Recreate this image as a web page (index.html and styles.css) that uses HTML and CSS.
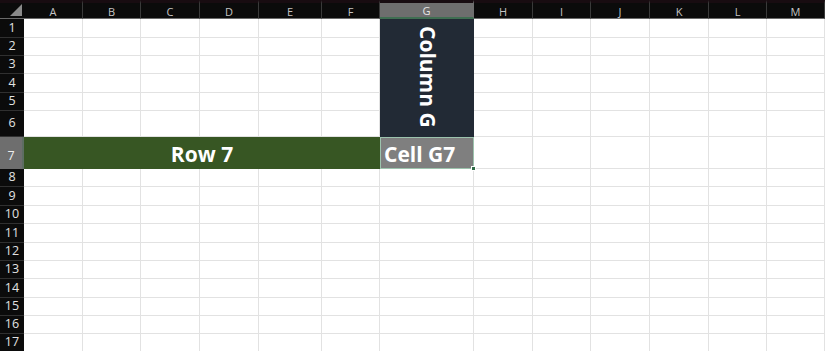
FILE: index.html
```html
<!DOCTYPE html>
<html>
<head>
<meta charset="utf-8">
<link rel="stylesheet" href="styles.css">
</head>
<body>
<div class="sheet">
  <div class="corner"><div class="tri"></div></div>
  <div class="ch">A</div><div class="ch">B</div><div class="ch">C</div><div class="ch">D</div><div class="ch">E</div><div class="ch">F</div><div class="ch sel">G</div><div class="ch">H</div><div class="ch">I</div><div class="ch">J</div><div class="ch">K</div><div class="ch">L</div><div class="ch">M</div>

  <div class="rh">1</div><div class="c"></div><div class="c"></div><div class="c"></div><div class="c"></div><div class="c"></div><div class="c"></div>
  <div class="colg"><span class="vtext">Column G</span></div>
  <div class="c"></div><div class="c"></div><div class="c"></div><div class="c"></div><div class="c"></div><div class="c"></div>

  <div class="rh">2</div><div class="c"></div><div class="c"></div><div class="c"></div><div class="c"></div><div class="c"></div><div class="c"></div><div class="c"></div><div class="c"></div><div class="c"></div><div class="c"></div><div class="c"></div><div class="c"></div>
  <div class="rh">3</div><div class="c"></div><div class="c"></div><div class="c"></div><div class="c"></div><div class="c"></div><div class="c"></div><div class="c"></div><div class="c"></div><div class="c"></div><div class="c"></div><div class="c"></div><div class="c"></div>
  <div class="rh">4</div><div class="c"></div><div class="c"></div><div class="c"></div><div class="c"></div><div class="c"></div><div class="c"></div><div class="c"></div><div class="c"></div><div class="c"></div><div class="c"></div><div class="c"></div><div class="c"></div>
  <div class="rh">5</div><div class="c"></div><div class="c"></div><div class="c"></div><div class="c"></div><div class="c"></div><div class="c"></div><div class="c"></div><div class="c"></div><div class="c"></div><div class="c"></div><div class="c"></div><div class="c"></div>
  <div class="rh">6</div><div class="c"></div><div class="c"></div><div class="c"></div><div class="c"></div><div class="c"></div><div class="c"></div><div class="c"></div><div class="c"></div><div class="c"></div><div class="c"></div><div class="c"></div><div class="c"></div>

  <div class="rh rsel">7</div>
  <div class="row7">Row 7</div>
  <div class="g7">Cell G7<span class="handle"></span></div>
  <div class="c"></div><div class="c"></div><div class="c"></div><div class="c"></div><div class="c"></div><div class="c"></div>

  <div class="rh">8</div><div class="c"></div><div class="c"></div><div class="c"></div><div class="c"></div><div class="c"></div><div class="c"></div><div class="c"></div><div class="c"></div><div class="c"></div><div class="c"></div><div class="c"></div><div class="c"></div><div class="c"></div>
  <div class="rh">9</div><div class="c"></div><div class="c"></div><div class="c"></div><div class="c"></div><div class="c"></div><div class="c"></div><div class="c"></div><div class="c"></div><div class="c"></div><div class="c"></div><div class="c"></div><div class="c"></div><div class="c"></div>
  <div class="rh">10</div><div class="c"></div><div class="c"></div><div class="c"></div><div class="c"></div><div class="c"></div><div class="c"></div><div class="c"></div><div class="c"></div><div class="c"></div><div class="c"></div><div class="c"></div><div class="c"></div><div class="c"></div>
  <div class="rh">11</div><div class="c"></div><div class="c"></div><div class="c"></div><div class="c"></div><div class="c"></div><div class="c"></div><div class="c"></div><div class="c"></div><div class="c"></div><div class="c"></div><div class="c"></div><div class="c"></div><div class="c"></div>
  <div class="rh">12</div><div class="c"></div><div class="c"></div><div class="c"></div><div class="c"></div><div class="c"></div><div class="c"></div><div class="c"></div><div class="c"></div><div class="c"></div><div class="c"></div><div class="c"></div><div class="c"></div><div class="c"></div>
  <div class="rh">13</div><div class="c"></div><div class="c"></div><div class="c"></div><div class="c"></div><div class="c"></div><div class="c"></div><div class="c"></div><div class="c"></div><div class="c"></div><div class="c"></div><div class="c"></div><div class="c"></div><div class="c"></div>
  <div class="rh">14</div><div class="c"></div><div class="c"></div><div class="c"></div><div class="c"></div><div class="c"></div><div class="c"></div><div class="c"></div><div class="c"></div><div class="c"></div><div class="c"></div><div class="c"></div><div class="c"></div><div class="c"></div>
  <div class="rh">15</div><div class="c"></div><div class="c"></div><div class="c"></div><div class="c"></div><div class="c"></div><div class="c"></div><div class="c"></div><div class="c"></div><div class="c"></div><div class="c"></div><div class="c"></div><div class="c"></div><div class="c"></div>
  <div class="rh">16</div><div class="c"></div><div class="c"></div><div class="c"></div><div class="c"></div><div class="c"></div><div class="c"></div><div class="c"></div><div class="c"></div><div class="c"></div><div class="c"></div><div class="c"></div><div class="c"></div><div class="c"></div>
  <div class="rh">17</div><div class="c"></div><div class="c"></div><div class="c"></div><div class="c"></div><div class="c"></div><div class="c"></div><div class="c"></div><div class="c"></div><div class="c"></div><div class="c"></div><div class="c"></div><div class="c"></div><div class="c"></div>
</div>
</body>
</html>
```

FILE: styles.css
```css
* { box-sizing: border-box; }
html, body {
  margin: 0;
  padding: 0;
  background: #ffffff;
  overflow: hidden;
}
.sheet {
  display: grid;
  width: 825px;
  grid-template-columns: 24px 59px 58px 59px 59px 63px 58px 94px 59px 58px 59px 59px 58px 58px;
  grid-template-rows: 19px 19px 18px 18px 19px 18px 26px 32px 18px 19px 18px 19px 18px 18px 19px 18px 18px 18px;
  font-family: "Open Sans", "Noto Sans", sans-serif;
  position: relative;
}
.corner {
  background: #0b0b0b;
  border-top: 3px solid #180c11;
  border-bottom: 1px solid #6a6a6a;
  position: relative;
}
.tri {
  position: absolute;
  right: 2px;
  bottom: 2px;
  width: 0;
  height: 0;
  border-left: 12px solid transparent;
  border-bottom: 12px solid #8a8a8a;
}
.ch {
  background: #0b0b0b;
  border-top: 3px solid #180c11;
  border-right: 1px solid #3a3a3a;
  border-bottom: 1px solid #6a6a6a;
  color: #c4c4c4;
  font-size: 11px;
  display: flex;
  align-items: center;
  justify-content: center;
  line-height: 1;
  padding-top: 1px;
}
.ch.sel {
  background: #6e6e6e;
  color: #e6e6e6;
  border-right-color: #6e6e6e;
  border-bottom: 2px solid #3f6e52;
}
.rh {
  background: #0b0b0b;
  border-bottom: 1px solid #303030;
  color: #e2e2e2;
  font-size: 12.5px;
  display: flex;
  align-items: center;
  justify-content: center;
  line-height: 1;
}
.rh.rsel {
  background: #6e6e6e;
  color: #eeeeee;
  align-items: flex-end;
  padding-bottom: 6px;
  border-right: 2px solid #5d6d62;
  border-bottom-color: #6e6e6e;
}
.c {
  border-right: 1px solid #e2e2e2;
  border-bottom: 1px solid #e2e2e2;
}
.colg {
  grid-row: span 6;
  background: #222a35;
  display: flex;
  justify-content: center;
  align-items: flex-end;
  padding-bottom: 9px;
  padding-left: 2px;
}
.vtext {
  writing-mode: vertical-rl;
  color: #ffffff;
  font-weight: 700;
  font-size: 21px;
}
.row7 {
  grid-column: span 6;
  background: #375623;
  color: #ffffff;
  font-weight: 700;
  font-size: 21px;
  display: flex;
  justify-content: center;
  align-items: flex-end;
  padding-bottom: 1px;
}
.g7 {
  background: #7f7f7f;
  color: #ffffff;
  font-weight: 700;
  font-size: 21px;
  display: flex;
  align-items: flex-end;
  padding-left: 3px;
  padding-bottom: 0px;
  border: 1px solid #9cc3ad;
  position: relative;
  white-space: nowrap;
}
.handle {
  position: absolute;
  right: -3px;
  bottom: -3px;
  width: 5px;
  height: 5px;
  background: #2f6b47;
  border: 1px solid #ffffff;
}
```
